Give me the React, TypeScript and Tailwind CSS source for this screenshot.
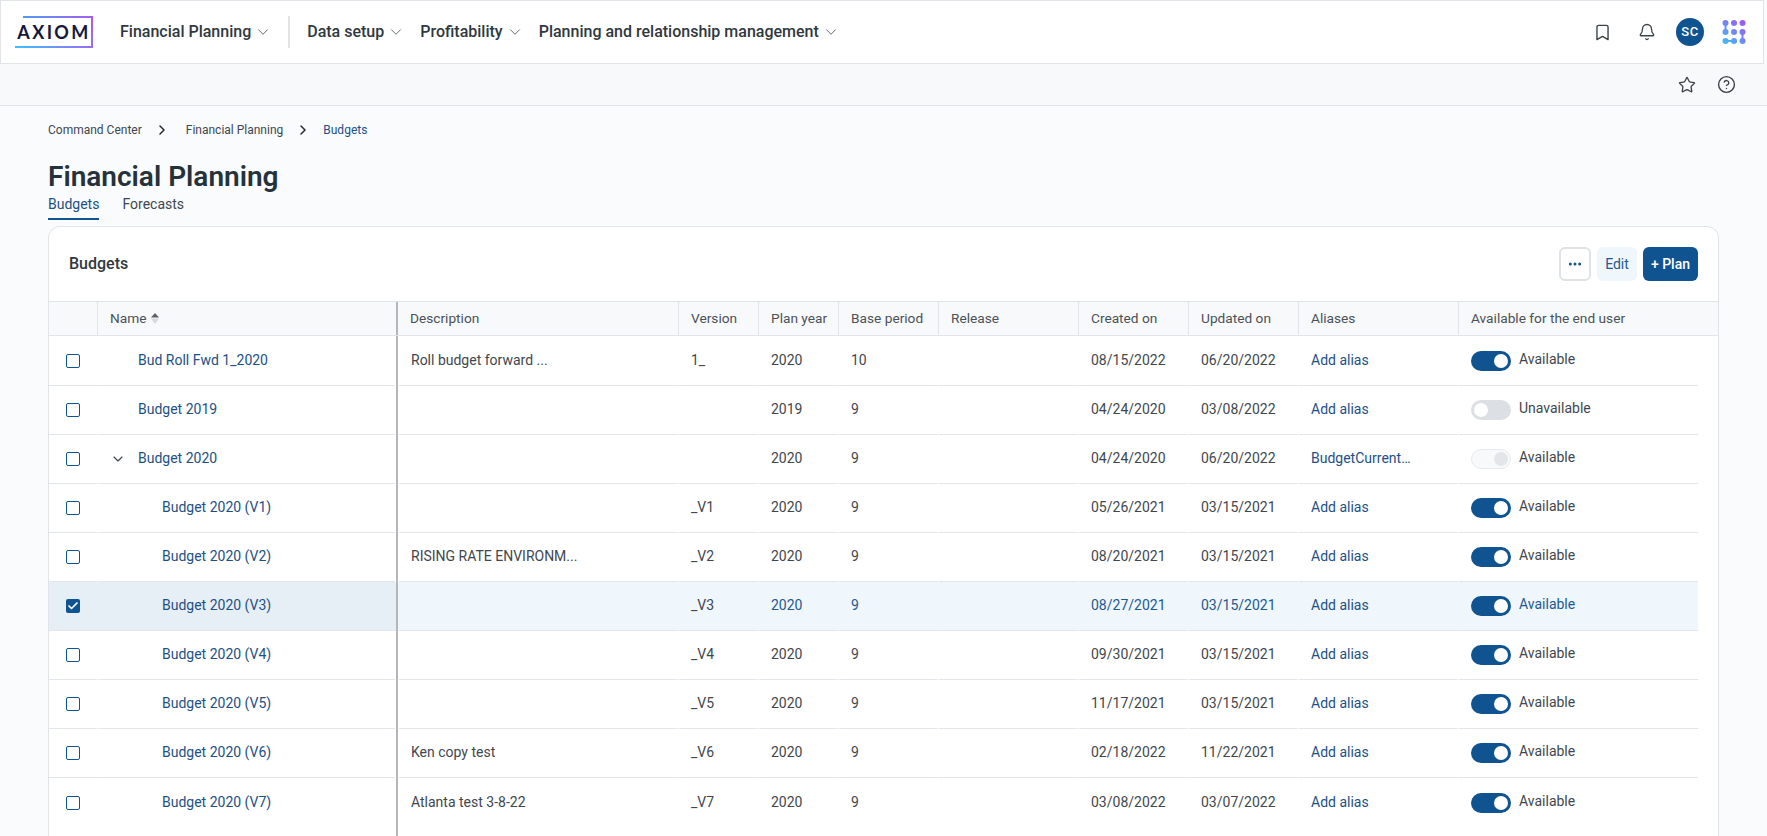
import { Bell, Bookmark, Check, ChevronDown, ChevronRight, CircleHelp, Ellipsis, Star } from "lucide-react";

const GRID = "grid grid-cols-[49px_300px_281px_80px_80px_100px_140px_110px_110px_160px_1fr]";

type Row = {
  name: string;
  level: 0 | 1;
  desc?: string;
  version?: string;
  year: string;
  period: string;
  created: string;
  updated: string;
  alias?: string;
  status?: "on" | "off" | "locked";
  expanded?: boolean;
  selected?: boolean;
};

const ROWS: Row[] = [
  { name: "Bud Roll Fwd 1_2020", level: 0, desc: "Roll budget forward ...", version: "1_", year: "2020", period: "10", created: "08/15/2022", updated: "06/20/2022" },
  { name: "Budget 2019", level: 0, year: "2019", period: "9", created: "04/24/2020", updated: "03/08/2022", status: "off" },
  { name: "Budget 2020", level: 0, year: "2020", period: "9", created: "04/24/2020", updated: "06/20/2022", alias: "BudgetCurrent…", status: "locked", expanded: true },
  { name: "Budget 2020 (V1)", level: 1, version: "_V1", year: "2020", period: "9", created: "05/26/2021", updated: "03/15/2021" },
  { name: "Budget 2020 (V2)", level: 1, desc: "RISING RATE ENVIRONM...", version: "_V2", year: "2020", period: "9", created: "08/20/2021", updated: "03/15/2021" },
  { name: "Budget 2020 (V3)", level: 1, version: "_V3", year: "2020", period: "9", created: "08/27/2021", updated: "03/15/2021", selected: true },
  { name: "Budget 2020 (V4)", level: 1, version: "_V4", year: "2020", period: "9", created: "09/30/2021", updated: "03/15/2021" },
  { name: "Budget 2020 (V5)", level: 1, version: "_V5", year: "2020", period: "9", created: "11/17/2021", updated: "03/15/2021" },
  { name: "Budget 2020 (V6)", level: 1, desc: "Ken copy test", version: "_V6", year: "2020", period: "9", created: "02/18/2022", updated: "11/22/2021" },
  { name: "Budget 2020 (V7)", level: 1, desc: "Atlanta test 3-8-22", version: "_V7", year: "2020", period: "9", created: "03/08/2022", updated: "03/07/2022" },
];

const HEADERS = ["Description", "Version", "Plan year", "Base period", "Release", "Created on", "Updated on", "Aliases", "Available for the end user"];

function Logo() {
  return (
    <div className="relative flex h-8 w-[78px] items-center justify-center">
      <svg className="absolute inset-0" width="78" height="32" viewBox="0 0 78 32" fill="none">
        <defs>
          <linearGradient id="logoTop" x1="8" y1="0" x2="78" y2="0" gradientUnits="userSpaceOnUse">
            <stop stopColor="#4f9df5" />
            <stop offset="1" stopColor="#a45df0" />
          </linearGradient>
          <linearGradient id="logoBottom" x1="0" y1="0" x2="78" y2="0" gradientUnits="userSpaceOnUse">
            <stop stopColor="#3cc0f8" />
            <stop offset="1" stopColor="#9a6cf0" />
          </linearGradient>
        </defs>
        <path d="M8 1H77V15" stroke="url(#logoTop)" strokeWidth="2" />
        <path d="M0 31H77V15" stroke="url(#logoBottom)" strokeWidth="2" />
      </svg>
      <span className="font-['Lato',sans-serif] text-[18px] font-bold leading-none tracking-[2.4px] text-[#17173d]">AXIOM</span>
    </div>
  );
}

function AppsIcon() {
  const dots = [
    [3.5, 3],
    [12, 3],
    [20.5, 3],
    [3.5, 12],
    [12, 12],
    [20.5, 12],
    [3.5, 21],
    [12, 21],
    [20.5, 21],
  ];
  return (
    <svg width="24" height="24" viewBox="0 0 24 24" fill="none">
      <defs>
        <linearGradient id="apps" x1="2" y1="23" x2="22" y2="1" gradientUnits="userSpaceOnUse">
          <stop stopColor="#3cbcf8" />
          <stop offset="1" stopColor="#a256f0" />
        </linearGradient>
      </defs>
      <g fill="url(#apps)">
        {dots.map(([cx, cy]) => (
          <circle key={`${cx}-${cy}`} cx={cx} cy={cy} r="3" />
        ))}
        <rect x="2.5" y="3" width="2" height="9" />
        <rect x="19.5" y="12" width="2" height="9" />
        <rect x="3.5" y="20" width="8.5" height="2" />
      </g>
    </svg>
  );
}

function NavItem({ label, className }: { label: string; className?: string }) {
  return (
    <div className={`flex items-center gap-[3px] ${className ?? ""}`}>
      <span className="text-base font-medium leading-6 text-[#2f3840]">{label}</span>
      <ChevronDown size={18} strokeWidth={1.25} className="text-[#5b6269]" />
    </div>
  );
}

function SortIcon() {
  return (
    <svg width="8" height="11" viewBox="0 0 8 11" className="ml-[5px]">
      <path d="M4 0L8 4.5H0Z" fill="#5a6067" />
      <path d="M0 5.5H8L4 11Z" fill="#d6d8db" />
    </svg>
  );
}

function Toggle({ status }: { status: "on" | "off" | "locked" }) {
  if (status === "off") {
    return (
      <div className="flex h-5 w-10 items-center rounded-full bg-[#dcdfe3] pl-[3px]">
        <div className="size-[14px] rounded-full bg-white" />
      </div>
    );
  }
  if (status === "locked") {
    return (
      <div className="flex h-5 w-10 items-center justify-end rounded-full border border-[#e8eaed] bg-[#f8f9fa] pr-[2px]">
        <div className="size-[14px] rounded-full bg-[#e3e5e8]" />
      </div>
    );
  }
  return (
    <div className="flex h-5 w-10 items-center justify-end rounded-full bg-[#0f5490] pr-[3px]">
      <div className="size-[14px] rounded-full bg-white" />
    </div>
  );
}

function TableRow({ row, first, last }: { row: Row; first: boolean; last: boolean }) {
  const line = last ? "" : "border-b border-[#e2e5e9]";
  const text = row.selected ? "text-[#1d5a92]" : "text-[#3f474e]";
  const status = row.status ?? "on";
  const cells = [row.year, row.period, "", row.created, row.updated];

  return (
    <div className={`${GRID} mr-5 text-sm leading-5 ${first ? "h-[50px]" : "h-[49px]"} ${row.selected ? "bg-[#eff6fc]" : ""}`}>
      <div className={row.selected ? "bg-[#e7eff6]" : ""}>
        <div className={`mr-px flex h-full items-center pl-[17px] ${line}`}>
          {row.selected ? (
            <div className="flex size-[14px] items-center justify-center rounded-[2px] bg-[#0f5490]">
              <Check size={12} strokeWidth={3.5} className="text-white" />
            </div>
          ) : (
            <div className="size-[14px] rounded-[2px] border-[1.5px] border-[#0f5490] bg-white" />
          )}
        </div>
      </div>
      <div className={`border-r-2 border-[#b4b6b9] ${row.selected ? "bg-[#e7eff6]" : ""}`}>
        <div className={`mr-px flex h-full items-center pl-3 ${line}`}>
          <div className={`shrink-0 ${row.level === 1 ? "w-[52px]" : "w-7"}`}>
            {row.expanded && <ChevronDown size={16} strokeWidth={1.75} className="text-[#3f474e]" />}
          </div>
          <span className="mb-[2px] text-[#1d5086]">{row.name}</span>
        </div>
      </div>
      <div className={`ml-px mr-px flex items-center pb-[2px] pl-3 text-[#3f474e] ${line}`}>{row.desc}</div>
      <div className={`mr-px flex items-center pb-[2px] pl-3 text-[#3f474e] ${line}`}>{row.version}</div>
      {cells.map((value, i) => (
        <div key={i} className={`mr-px flex items-center pb-[2px] pl-3 ${text} ${line}`}>
          {value}
        </div>
      ))}
      <div className={`mr-px flex items-center pb-[2px] pl-3 text-[#1d5086] ${line}`}>{row.alias ?? "Add alias"}</div>
      <div className={`flex items-center gap-2 pl-3 ${line}`}>
        <Toggle status={status} />
        <span className={`-mt-[4px] ${text}`}>{status === "off" ? "Unavailable" : "Available"}</span>
      </div>
    </div>
  );
}

export default function App() {
  return (
    <div className="flex h-[836px] w-[1767px] flex-col overflow-hidden bg-[#f9fbfd] font-['Roboto',sans-serif]">
      <header className="mr-[3px] flex h-16 shrink-0 items-center border border-[#e1e4e8] bg-white pl-[14px] pr-[17px]">
        <Logo />
        <NavItem label="Financial Planning" className="ml-[27px]" />
        <div className="ml-4 h-8 w-[2px] bg-[#e1e4e8]" />
        <NavItem label="Data setup" className="ml-[17px]" />
        <NavItem label="Profitability" className="ml-[15px]" />
        <NavItem label="Planning and relationship management" className="ml-[15px]" />
        <div className="ml-auto flex items-center">
          <Bookmark size={19} strokeWidth={1.75} className="text-[#3b4249]" />
          <Bell size={18} strokeWidth={1.75} className="ml-[26px] text-[#3b4249]" />
          <div className="ml-5 flex size-7 items-center justify-center rounded-full bg-[#0f5490] text-[13px] font-medium tracking-[0.5px] text-white">SC</div>
          <div className="ml-[18px]">
            <AppsIcon />
          </div>
        </div>
      </header>

      <div className="flex h-[42px] shrink-0 items-center justify-end gap-[21px] border-b border-[#e1e4e8] bg-[#f8f9fb] pr-[31px]">
        <Star size={18} strokeWidth={1.75} className="text-[#3b4249]" />
        <CircleHelp size={19} strokeWidth={1.75} className="text-[#3b4249]" />
      </div>

      <main className="flex min-h-0 flex-1 flex-col pl-12 pr-[48px]">
        <nav className="mt-4 flex h-4 items-center text-xs leading-4">
          <span className="text-[#3f474e]">Command Center</span>
          <ChevronRight size={16} strokeWidth={2.25} className="ml-3 mr-4 text-[#23292e]" />
          <span className="text-[#3f474e]">Financial Planning</span>
          <ChevronRight size={16} strokeWidth={2.25} className="mx-3 text-[#23292e]" />
          <span className="text-[#1d5086]">Budgets</span>
        </nav>

        <h1 className="mt-[21px] text-[28px] font-semibold leading-9 text-[#25323b]">Financial Planning</h1>

        <div className="-mt-px flex gap-[23px] text-sm leading-5">
          <div className="border-b-2 border-[#0f5490] pb-1 text-[#1d5086]">Budgets</div>
          <div className="text-[#3f474e]">Forecasts</div>
        </div>

        <section className="mt-[6px] min-h-[700px] w-[1671px] rounded-t-xl border border-[#e1e4e8] bg-white">
          <div className="flex h-[74px] items-center justify-between px-5">
            <h2 className="text-base font-medium text-[#2f3840]">Budgets</h2>
            <div className="flex items-center gap-[6px] text-sm">
              <button className="flex h-[34px] w-8 items-center justify-center rounded-md border-2 border-[#dfe3e8] bg-white text-[#0f5490]">
                <Ellipsis size={16} strokeWidth={2.5} />
              </button>
              <button className="h-[34px] w-10 rounded-md bg-[#eff6fc] text-[#1d5a92]">Edit</button>
              <button className="h-[34px] w-[55px] rounded-md bg-[#0f5490] font-medium text-white">+ Plan</button>
            </div>
          </div>

          <div className={`${GRID} h-[35px] border-y border-[#e1e4e8] bg-[#f8f9fb] text-[13.7px] text-[#4a5157]`}>
            <div className="border-r border-[#e1e4e8]" />
            <div className="flex items-center border-r-2 border-[#b4b6b9] pl-3">
              Name
              <SortIcon />
            </div>
            {HEADERS.map((label, i) => (
              <div key={label} className={`flex items-center pl-3 ${i < HEADERS.length - 1 ? "border-r border-[#e1e4e8]" : ""}`}>
                {label}
              </div>
            ))}
          </div>

          {ROWS.map((row, i) => (
            <TableRow key={row.name} row={row} first={i === 0} last={i === ROWS.length - 1} />
          ))}
          <div className={`${GRID} mr-5 h-[20px]`}>
            <div />
            <div className="border-r-2 border-[#b4b6b9]" />
          </div>
        </section>
      </main>
    </div>
  );
}
